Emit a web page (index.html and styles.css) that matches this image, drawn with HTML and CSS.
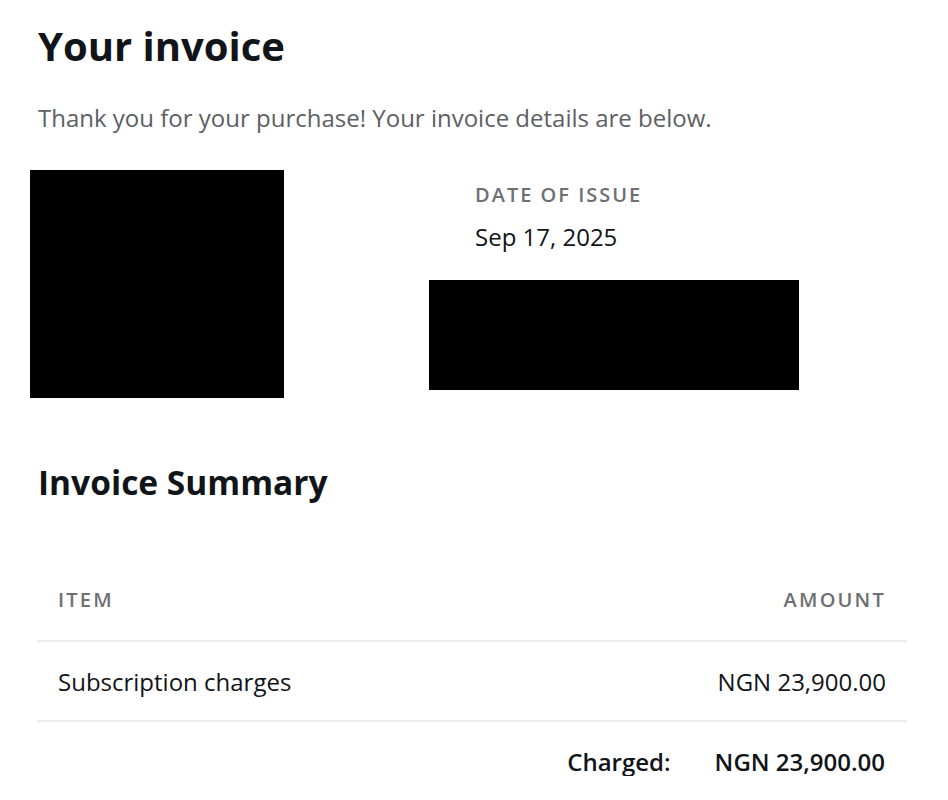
FILE: index.html
```html
<!DOCTYPE html>
<html>
<head>
<meta charset="utf-8">
<link rel="stylesheet" href="styles.css">
</head>
<body>
<div class="page">
  <h1 class="title">Your invoice</h1>
  <p class="lead">Thank you for your purchase! Your invoice details are below.</p>
  <div class="info">
    <div class="redact redact-left"></div>
    <div class="info-right">
      <div class="meta">
        <div class="label">DATE OF ISSUE</div>
        <div class="value">Sep 17, 2025</div>
      </div>
      <div class="redact redact-right"></div>
    </div>
  </div>
  <h2 class="summary">Invoice Summary</h2>
  <table class="items">
    <thead>
      <tr><th class="left">ITEM</th><th class="right">AMOUNT</th></tr>
    </thead>
    <tbody>
      <tr class="row"><td class="left">Subscription charges</td><td class="right">NGN 23,900.00</td></tr>
    </tbody>
  </table>
  <div class="total">
    <span class="total-label">Charged:</span>
    <span class="total-value">NGN 23,900.00</span>
  </div>
</div>
</body>
</html>
```
FILE: styles.css
```css
html, body {
  margin: 0;
  padding: 0;
  background: #ffffff;
}
body {
  font-family: "Open Sans", "Noto Sans", sans-serif;
  color: #111418;
}
.page {
  padding: 0 41px 0 38px;
}
.title {
  margin: 0;
  padding-top: 22px;
  font-size: 40px;
  line-height: 48px;
  font-weight: 700;
  color: #111418;
}
.lead {
  margin: 0;
  margin-top: 32px;
  font-size: 24px;
  line-height: 32px;
  color: #5c5f63;
}
.info {
  display: flex;
  margin-top: 36px;
  margin-left: -8px;
}
.redact {
  background: #000;
}
.redact-left {
  width: 254px;
  height: 228px;
  flex: none;
}
.info-right {
  margin-left: 145px;
  display: flex;
  flex-direction: column;
}
.meta {
  padding-left: 46px;
  padding-top: 13px;
}
.label {
  font-size: 20px;
  line-height: 24px;
  font-weight: 600;
  letter-spacing: 2px;
  color: #6d6f72;
}
.value {
  margin-top: 16px;
  font-size: 24px;
  line-height: 28px;
  color: #111418;
}
.redact-right {
  margin-top: 29px;
  width: 370px;
  height: 110px;
}
.summary {
  margin: 0;
  margin-top: 64px;
  font-size: 33.5px;
  line-height: 40px;
  font-weight: 700;
}
.items {
  width: 870px;
  margin-left: -1px;
  margin-top: 86px;
  border-collapse: collapse;
}
.items th {
  font-size: 20px;
  font-weight: 600;
  letter-spacing: 2.2px;
  color: #6d6f72;
  padding: 0 21px 28px;
  line-height: 24px;
  border-bottom: 2px solid #ececec;
}
.items th.right {
  padding-right: 21px;
}
.items td {
  font-size: 24px;
  line-height: 28px;
  padding: 26px 21px 24px;
  border-bottom: 2px solid #ececec;
}
.left { text-align: left; }
.right { text-align: right; }
.total {
  display: flex;
  justify-content: flex-end;
  gap: 44px;
  padding: 26px 22px 0 0;
  font-size: 24px;
  line-height: 28px;
  font-weight: 600;
}
```
